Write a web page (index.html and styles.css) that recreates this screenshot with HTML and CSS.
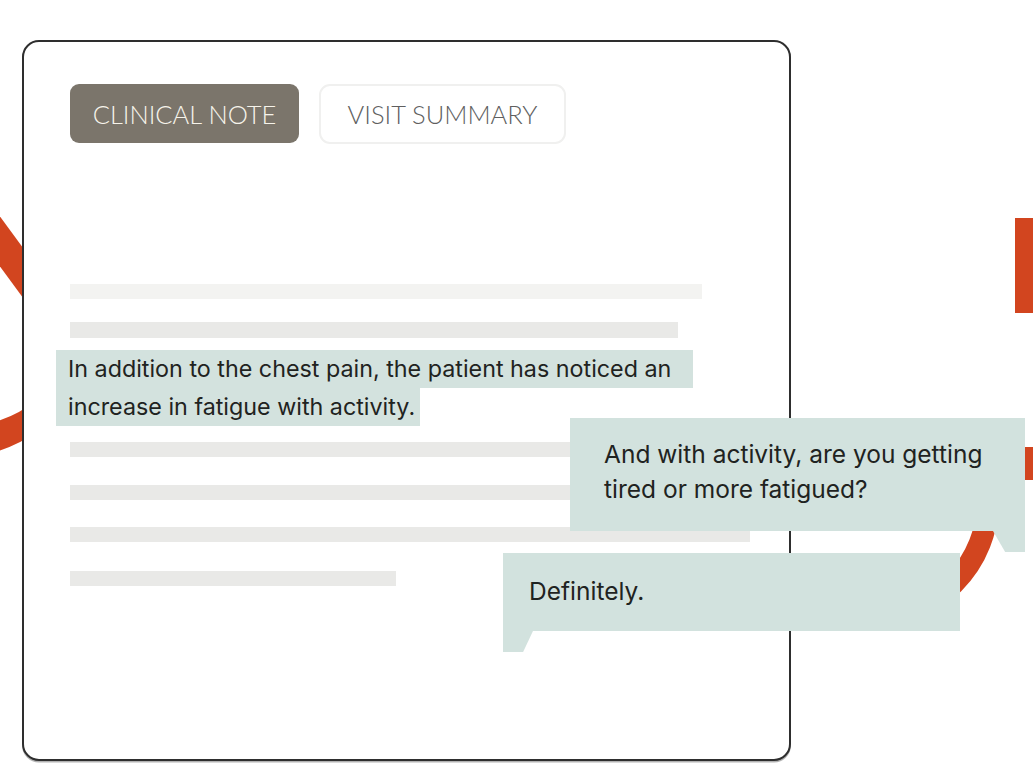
FILE: index.html
```html
<!DOCTYPE html>
<html lang="en">
<head>
<meta charset="utf-8">
<title>Clinical note</title>
<link rel="stylesheet" href="styles.css">
</head>
<body>
<div class="stage">
  <svg class="deco" width="1033" height="777" viewBox="0 0 1033 777" aria-hidden="true">
    <polygon points="-10,203 40,271 40,321 -10,253" fill="#d2451f"/>
    <path d="M -10 423 Q 14 418 40 398 L 40 430 Q 14 448 -10 453 Z" fill="#d2451f"/>
    <rect x="1015" y="218" width="30" height="95" fill="#d2451f"/>
    <rect x="1000" y="447" width="45" height="33" fill="#d2451f"/>
    <path d="M 988 500 A 118 118 0 0 1 870 618" fill="none" stroke="#d2451f" stroke-width="22"/>
  </svg>

  <section class="card">
    <div class="tabs">
      <div class="tab tab-active">CLINICAL NOTE</div>
      <div class="tab tab-idle">VISIT SUMMARY</div>
    </div>
    <div class="note">
      <div class="bar bar-faint w632"></div>
      <div class="bar w608 gap-23"></div>
      <div class="hl">
        <div class="hl-line hl-first">In addition to the chest pain, the patient has noticed an</div>
        <div class="hl-line hl-last">increase in fatigue with activity.</div>
      </div>
      <div class="bar w600 gap-16"></div>
      <div class="bar w600 gap-28"></div>
      <div class="bar w680 gap-27"></div>
      <div class="bar w326 gap-29"></div>
    </div>
  </section>

  <div class="bubble bubble-q">
    <p>And with activity, are you getting<br>tired or more fatigued?</p>
  </div>
  <div class="bubble bubble-a">
    <p>Definitely.</p>
  </div>
</div>
</body>
</html>
```

FILE: styles.css
```css
* { box-sizing: border-box; }

html, body {
  margin: 0;
  padding: 0;
  background: #ffffff;
}

.stage {
  position: relative;
  width: 1033px;
  height: 777px;
  overflow: hidden;
  background: #ffffff;
  padding: 40px 0 0 22px;
  font-family: "Inter", "Liberation Sans", sans-serif;
}

.deco {
  position: absolute;
  left: 0;
  top: 0;
  z-index: 0;
}

.card {
  position: relative;
  z-index: 1;
  width: 769px;
  height: 721px;
  background: #ffffff;
  border: 2px solid #2e2e2e;
  border-radius: 17px;
  box-shadow: 0 1.5px 0 rgba(0, 0, 0, 0.3);
  padding: 42px 0 0 46px;
}

.tabs {
  display: flex;
  gap: 20px;
}

.tab {
  height: 59px;
  display: flex;
  align-items: center;
  justify-content: center;
  font-family: "Lato", "Liberation Sans", sans-serif;
  font-weight: 300;
  font-size: 25.5px;
  border-radius: 9px;
}

.tab-active {
  width: 229px;
  background: #7b756b;
  color: #f6f3ea;
}

.tab-idle {
  width: 247px;
  height: 60px;
  background: #ffffff;
  border: 2px solid #f0f0ef;
  color: #5f5f5f;
  border-radius: 11px;
}

.note {
  padding-top: 140px;
  display: flex;
  flex-direction: column;
}

.bar {
  height: 15px;
  background: #e9e9e7;
}

.bar-faint { background: #f3f3f1; }

.w632 { width: 632px; }
.w608 { width: 608px; height: 16px; }
.w600 { width: 600px; }
.w680 { width: 680px; }
.w326 { width: 326px; }

.gap-23 { margin-top: 23px; }
.gap-16 { margin-top: 16px; }
.gap-28 { margin-top: 28px; }
.gap-27 { margin-top: 27px; }
.gap-29 { margin-top: 29px; }

.hl {
  margin-top: 12px;
  margin-left: -14px;
  display: flex;
  flex-direction: column;
  align-items: flex-start;
}

.hl-line {
  background: #d3e2de;
  color: #1f2321;
  font-size: 23.3px;
  line-height: 38px;
  height: 38px;
  padding: 0 12px;
  white-space: nowrap;
}

.hl-first { width: 637px; }
.hl-last { width: 364px; }

.bubble {
  position: absolute;
  z-index: 2;
  background: #d2e2de;
  color: #1f2321;
}

.bubble p {
  margin: 0;
}

.bubble::after {
  content: "";
  position: absolute;
  top: 100%;
  height: 21px;
  background: #d2e2de;
}

.bubble-q {
  left: 570px;
  top: 418px;
  width: 455px;
  height: 113px;
  padding: 19px 0 0 34px;
  font-size: 24.5px;
  line-height: 35px;
}

.bubble-q::after {
  right: 0;
  width: 32px;
  clip-path: polygon(0 0, 100% 0, 100% 100%, 38% 100%);
}

.bubble-a {
  left: 503px;
  top: 553px;
  width: 457px;
  height: 78px;
  padding: 21px 0 0 26px;
  font-size: 24.5px;
  line-height: 35px;
}

.bubble-a::after {
  left: 0;
  width: 30px;
  clip-path: polygon(0 0, 100% 0, 67% 100%, 0 100%);
}
```
